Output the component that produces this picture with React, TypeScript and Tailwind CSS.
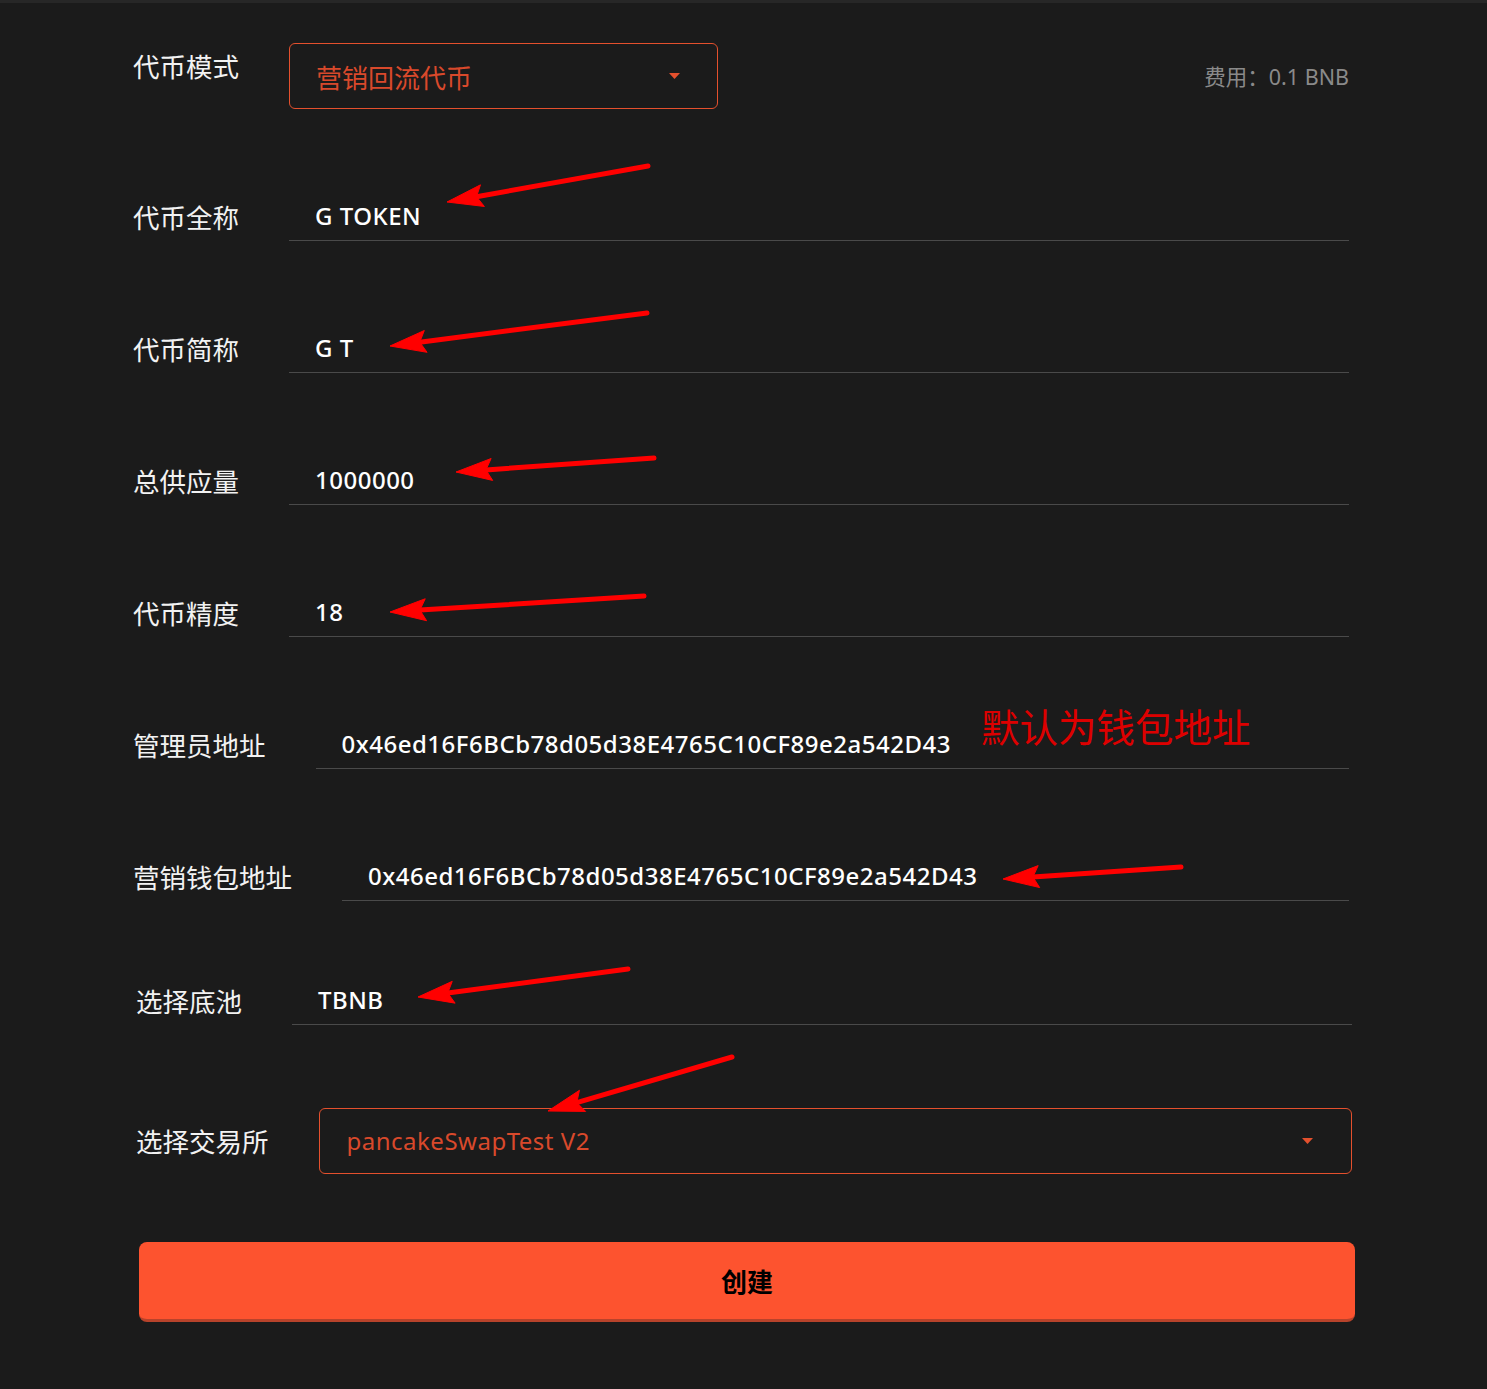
import React from "react";

const cjk = "font-['Noto_Sans_CJK_SC','Noto_Sans',sans-serif]";
const latin = "font-['Noto_Sans','Noto_Sans_CJK_SC',sans-serif]";

// annotation arrows: tail -> tip
const arrows = [
  { x1: 648, y1: 163, x2: 447, y2: 199 },
  { x1: 647, y1: 310, x2: 390, y2: 343 },
  { x1: 654, y1: 455, x2: 456, y2: 469 },
  { x1: 644, y1: 593, x2: 390, y2: 609 },
  { x1: 1181, y1: 864, x2: 1003, y2: 876 },
  { x1: 628, y1: 966, x2: 418, y2: 994 },
  { x1: 732, y1: 1054, x2: 548, y2: 1108 },
];

const Arrow = ({ x1, y1, x2, y2 }: { x1: number; y1: number; x2: number; y2: number }) => {
  const len = Math.hypot(x2 - x1, y2 - y1);
  const ux = (x2 - x1) / len;
  const uy = (y2 - y1) / len;
  const px = -uy;
  const py = ux;
  const head = 36;
  const wing = 11;
  const bx = x2 - ux * head;
  const by = y2 - uy * head;
  const nx = x2 - ux * (head - 6);
  const ny = y2 - uy * (head - 6);
  const pts = [
    `${x2},${y2}`,
    `${bx + px * wing},${by + py * wing}`,
    `${nx},${ny}`,
    `${bx - px * wing},${by - py * wing}`,
  ].join(" ");
  return (
    <g fill="#ff0000" stroke="#ff0000">
      <line x1={x1} y1={y1} x2={nx} y2={ny} strokeWidth={5} strokeLinecap="round" />
      <polygon points={pts} strokeWidth={1} strokeLinejoin="round" />
    </g>
  );
};

const Caret = () => (
  <svg width="11" height="6" viewBox="0 0 11 6">
    <path d="M0 0h11L5.5 6z" fill="#e4502d" />
  </svg>
);

const Field = ({ label, value }: { label: string; value: string }) => (
  <div className="flex items-center gap-[50px]">
    <span className={`${cjk} text-[26.5px] text-[#f2f2f2] whitespace-nowrap`}>{label}</span>
    <div className="flex h-[49px] flex-1 items-center border-b border-[#4a4a4a] pl-[26px]">
      <span className={`${latin} text-[24px] font-medium tracking-[0.5px] text-white`}>{value}</span>
    </div>
  </div>
);

export default function App() {
  return (
    <div className="relative min-h-[1389px] border-t-[3px] border-[#272727] bg-[#1b1b1b]">
      <div className="flex w-[1349px] flex-col pl-[133px] pt-[40px]">
        <div className="flex items-center gap-[50px]">
          <span className={`${cjk} -mt-[20px] text-[26.5px] text-[#f2f2f2]`}>代币模式</span>
          <div className="flex h-[66px] w-[429px] items-center justify-between rounded-[6px] border border-[#e4502d] pl-[26px] pr-[37px]">
            <span className={`${cjk} text-[26px] text-[#d9492b]`}>营销回流代币</span>
            <Caret />
          </div>
          <span className={`${latin} ml-auto mt-[2px] text-[21.5px] text-[#8a8a8a]`}>费用：0.1 BNB</span>
        </div>

        <div className="mt-[83px] flex flex-col gap-[83px]">
          <Field label="代币全称" value="G TOKEN" />
          <Field label="代币简称" value="G T" />
          <Field label="总供应量" value="1000000" />
          <Field label="代币精度" value="18" />
          <Field label="管理员地址" value="0x46ed16F6BCb78d05d38E4765C10CF89e2a542D43" />
          <Field label="营销钱包地址" value="0x46ed16F6BCb78d05d38E4765C10CF89e2a542D43" />
        </div>

        <div className="ml-[3px] mr-[-3px] mt-[75px] flex flex-col gap-[83px]">
          <Field label="选择底池" value="TBNB" />
          <div className="flex items-center gap-[50px]">
            <span className={`${cjk} text-[26.5px] text-[#f2f2f2]`}>选择交易所</span>
            <div className="flex h-[66px] flex-1 items-center justify-between rounded-[6px] border border-[#e4502d] pl-[27px] pr-[38px]">
              <span className={`${latin} text-[24px] tracking-[0.5px] text-[#d9492b]`}>pancakeSwapTest V2</span>
              <Caret />
            </div>
          </div>
        </div>

        <button
          className={`${cjk} ml-[6px] mr-[-6px] mt-[68px] flex h-[80px] items-center justify-center rounded-[8px] border-b-[3px] border-[#b8432b] bg-[#fd532f] text-[26px] font-bold text-black`}
        >
          创建
        </button>
      </div>

      <span className={`${cjk} absolute left-[981px] top-[694px] text-[38.5px] text-[#dd0000]`}>默认为钱包地址</span>

      <svg className="pointer-events-none absolute left-0 top-0" width="1487" height="1389">
        {arrows.map((a, i) => (
          <Arrow key={i} {...a} />
        ))}
      </svg>
    </div>
  );
}
